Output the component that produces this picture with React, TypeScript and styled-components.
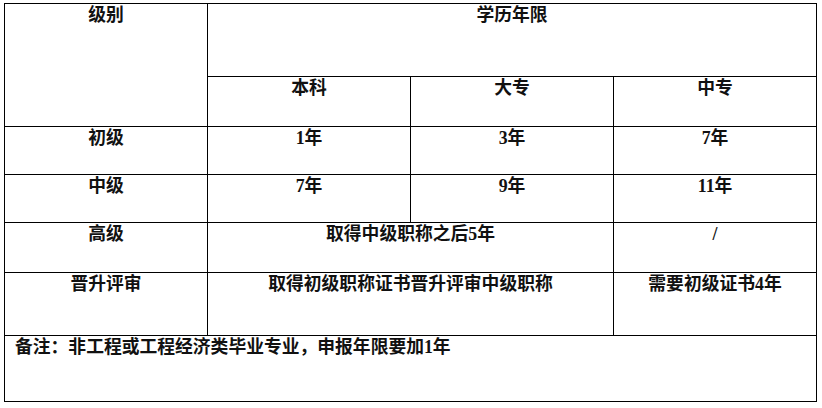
import React, { FunctionComponent } from 'react';
import styled, { createGlobalStyle } from 'styled-components';

const GlobalStyle = createGlobalStyle`
  html, body {
    margin: 0;
    padding: 0;
    background: #fff;
  }
`

type Row = {
    level: string
    cells: { text: string; span?: number }[]
    height: number
}

const rows: Row[] = [
    { level: '初级', cells: [{ text: '1年' }, { text: '3年' }, { text: '7年' }], height: 48 },
    { level: '中级', cells: [{ text: '7年' }, { text: '9年' }, { text: '11年' }], height: 48 },
    { level: '高级', cells: [{ text: '取得中级职称之后5年', span: 2 }, { text: '/' }], height: 50 },
    { level: '晋升评审', cells: [{ text: '取得初级职称证书晋升评审中级职称', span: 2 }, { text: '需要初级证书4年' }], height: 63 },
]

const App: FunctionComponent = () => {
    return (
        <>
            <GlobalStyle />
            <Page>
                <Table>
                    <colgroup>
                        <col style={{ width: 203 }} />
                        <col style={{ width: 203 }} />
                        <col style={{ width: 203 }} />
                        <col style={{ width: 203 }} />
                    </colgroup>
                    <tbody>
                        <TableRow $height={73}>
                            <Cell rowSpan={2}>级别</Cell>
                            <Cell colSpan={3}>学历年限</Cell>
                        </TableRow>
                        <TableRow $height={50}>
                            <Cell>本科</Cell>
                            <Cell>大专</Cell>
                            <Cell>中专</Cell>
                        </TableRow>
                        {rows.map((row) => (
                            <TableRow key={row.level} $height={row.height}>
                                <Cell>{row.level}</Cell>
                                {row.cells.map((c, i) => (
                                    <Cell key={i} colSpan={c.span}>{c.text}</Cell>
                                ))}
                            </TableRow>
                        ))}
                        <TableRow $height={66}>
                            <Cell colSpan={4} $align="left">备注：非工程或工程经济类毕业专业，申报年限要加1年</Cell>
                        </TableRow>
                    </tbody>
                </Table>
            </Page>
        </>
    );
}

const Page = styled.div`
  padding: 3px 0 0 4px;
`
const Table = styled.table`
  border-collapse: collapse;
  table-layout: fixed;
  width: 813px;
  font-family: "Liberation Serif", "Noto Sans CJK SC", serif;
  font-size: 17.8px;
  font-weight: 700;
  color: #111;
`
const TableRow = styled.tr<{ $height: number }>`
  height: ${(p) => p.$height}px;
`
const Cell = styled.td<{ $align?: 'left' | 'center' }>`
  border: 1px solid #000;
  vertical-align: top;
  text-align: ${(p) => p.$align || 'center'};
  padding: 1px ${(p) => (p.$align === 'left' ? '10px' : '4px')} 0;
  line-height: 20px;
`

export default App;
